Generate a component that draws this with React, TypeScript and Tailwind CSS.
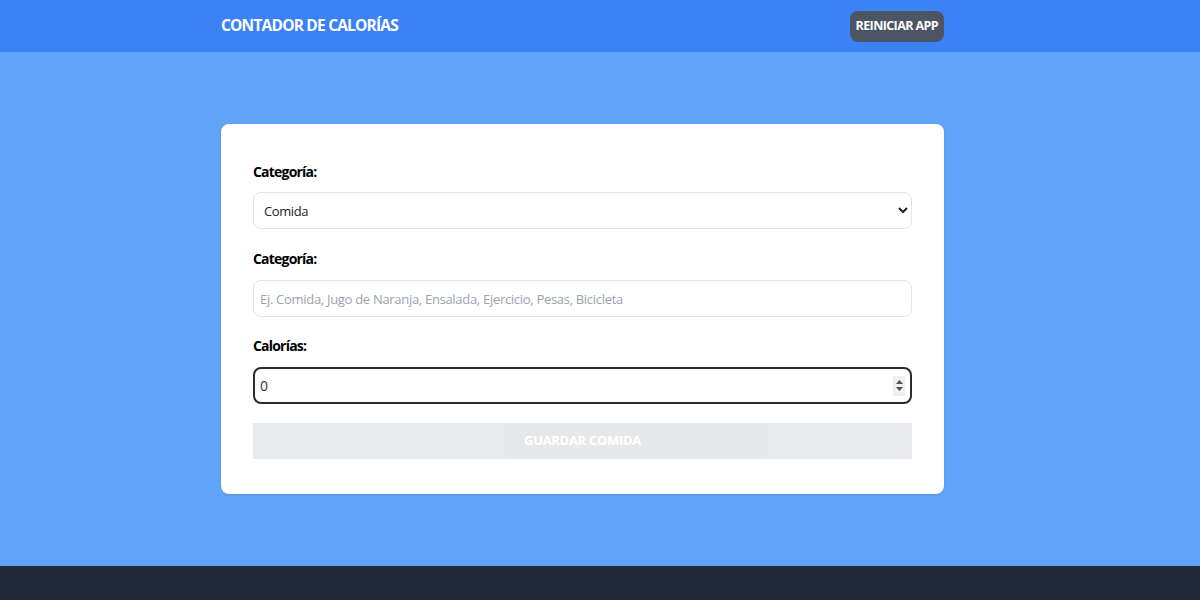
const FONT = "font-['Open_Sans','Noto_Sans',sans-serif]"

const CATEGORIES = [
  { id: 1, name: 'Comida' },
  { id: 2, name: 'Ejercicio' },
]

function Spinner() {
  return (
    <div className="pointer-events-none absolute right-[7px] top-1/2 flex h-[20px] w-[12px] -translate-y-1/2 flex-col items-center justify-center gap-[3px] bg-[#efefef]">
      <svg width="7" height="4" viewBox="0 0 7 4">
        <path d="M3.5 0 L7 4 L0 4 Z" fill="#505050" />
      </svg>
      <svg width="7" height="4" viewBox="0 0 7 4">
        <path d="M0 0 L7 0 L3.5 4 Z" fill="#505050" />
      </svg>
    </div>
  )
}

export default function App() {
  return (
    <div className={`flex h-[600px] flex-col overflow-hidden bg-[#60a5fa] ${FONT}`}>
      <header className="h-[52px] shrink-0 bg-[#3b82f6]">
        <div className="ml-[221px] flex h-full w-[723px] items-center justify-between">
          <h1 className="text-[15.5px] font-bold tracking-[-0.8px] text-white">
            CONTADOR DE CALORÍAS
          </h1>
          <button className="h-[31px] rounded-lg bg-[#4b5563] px-[6px] text-[12.5px] font-bold tracking-[-0.6px] text-white">
            REINICIAR APP
          </button>
        </div>
      </header>

      <main className="flex-1 py-[72px]">
        <form className="ml-[221px] flex w-[723px] flex-col rounded-lg bg-white px-8 pt-[37px] pb-[35px] shadow-sm">
          <div className="flex flex-col gap-[10px]">
            <label htmlFor="category" className="text-[14px] font-bold tracking-[-0.8px] text-black">
              Categoría:
            </label>
            <select
              id="category"
              className="h-[37px] w-full rounded-lg border border-[#e2e4e8] bg-white px-[6px] text-[13px] tracking-[-0.4px] text-[#222]"
              defaultValue={1}
            >
              {CATEGORIES.map((c) => (
                <option key={c.id} value={c.id}>
                  {c.name}
                </option>
              ))}
            </select>
          </div>

          <div className="mt-[19px] flex flex-col gap-[11px]">
            <label htmlFor="name" className="text-[14px] font-bold tracking-[-0.8px] text-black">
              Categoría:
            </label>
            <input
              id="name"
              type="text"
              className="h-[37px] w-full rounded-lg border border-[#e2e4e8] px-[6px] text-[13px] tracking-[-0.3px] placeholder:text-[#9ca3af]"
              placeholder="Ej. Comida, Jugo de Naranja, Ensalada, Ejercicio, Pesas, Bicicleta"
            />
          </div>

          <div className="mt-[18px] flex flex-col gap-[11px]">
            <label htmlFor="calories" className="text-[14px] font-bold tracking-[-0.8px] text-black">
              Calorías:
            </label>
            <div className="relative">
              <input
                id="calories"
                type="text"
                className="h-[37px] w-full rounded-lg border-2 border-[#2b2b2b] px-[5px] text-[14px] text-[#333] outline-none"
                defaultValue="0"
              />
              <Spinner />
            </div>
          </div>

          <button
            type="button"
            disabled
            className="mt-[19px] h-[36px] w-full bg-gray-800 text-[13px] font-bold tracking-[-0.3px] text-white uppercase disabled:opacity-10"
          >
            Guardar Comida
          </button>
        </form>
      </main>

      <footer className="h-[34px] shrink-0 bg-[#1f2937]" />
    </div>
  )
}
